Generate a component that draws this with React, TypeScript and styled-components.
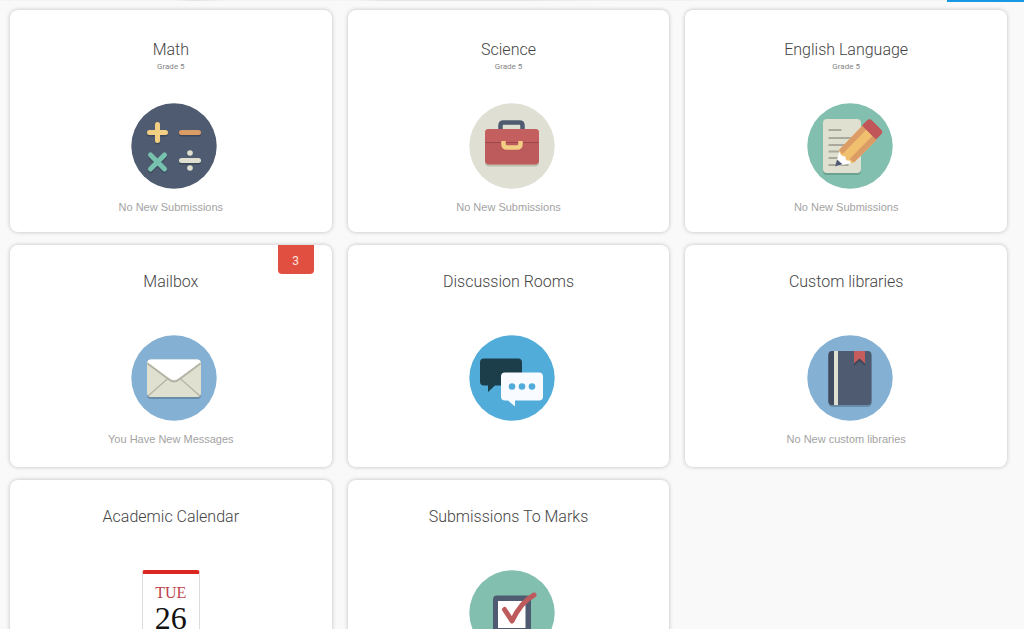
import React from "react";
import styled, { createGlobalStyle, css } from "styled-components";

const GlobalStyle = createGlobalStyle`
  * { box-sizing: border-box; }
  body {
    margin: 0;
    background: #f9f9f9;
    font-family: Roboto, "Liberation Sans", sans-serif;
  }
`;

const TopBar = styled.header`
  display: flex;
  justify-content: flex-end;
  height: 2px;
  background: linear-gradient(
      90deg,
      #f4f4f4 17%,
      #e2e2e2 19%,
      #f4f4f4 22%,
      #f4f4f4 35%,
      #e6e6e6 37%,
      #e6e6e6 52%,
      #f0f0f0 58%,
      #f4f4f4 90%
    )
    top / 100% 1px no-repeat;
`;

const TopBarAccent = styled.div`
  width: 77px;
  background: #1699e2;
`;

const Board = styled.main`
  display: grid;
  grid-template-columns: repeat(3, minmax(0, 1fr));
  column-gap: 16px;
  row-gap: 13px;
  padding: 8px 17px 13px 10px;
`;

const Card = styled.a<{ $graded?: boolean }>`
  position: relative;
  display: flex;
  flex-direction: column;
  align-items: center;
  min-height: 222px;
  padding-top: ${(p) => (p.$graded ? "28px" : "25px")};
  border-radius: 8px;
  background: #fff;
  box-shadow: 0 0 4px rgba(0, 0, 0, 0.24);
  color: #555;
  text-decoration: none;
`;

const Heading = styled.div`
  display: flex;
  flex-direction: column;
  align-items: center;
  height: 65px;
`;

const Title = styled.h2`
  margin: 0;
  font-size: 16px;
  line-height: 24px;
  font-weight: 300;
  color: #444;
`;

const Grade = styled.span`
  font-size: 8px;
  line-height: 10px;
  color: #858585;
`;

const Picture = styled.div<{ $round?: boolean }>`
  display: flex;
  justify-content: center;
  height: 86px;
  ${(p) =>
    p.$round &&
    css`
      padding-left: 7px;
    `}
`;

const Status = styled.p`
  margin: 11px 0 0;
  font-family: "Liberation Sans", sans-serif;
  font-size: 11px;
  line-height: 14px;
  color: #a3a3a3;
`;

const Badge = styled.span`
  position: absolute;
  top: 0;
  right: 18px;
  width: 36px;
  height: 29px;
  border-radius: 0 0 4px 4px;
  background: #e04f40;
  color: #fbe3df;
  font-size: 12px;
  line-height: 32px;
  text-align: center;
`;

const CalendarPage = styled.div`
  width: 58px;
  height: 76px;
  border: 1px solid #dcdcdc;
  border-top: 4px solid #d9281f;
  border-radius: 3px;
  background: #fff;
  font-family: "Liberation Serif", serif;
  text-align: center;
`;

const Weekday = styled.div`
  padding-top: 10px;
  font-size: 16px;
  line-height: 18px;
  color: #bb3f4a;
`;

const DayNumber = styled.div`
  font-size: 32px;
  line-height: 32px;
  color: #111;
`;

const Disc = ({ fill, children }: { fill: string; children: React.ReactNode }) => (
  <svg width="86" height="86" viewBox="0 0 86 86" aria-hidden="true">
    <circle cx="43" cy="43" r="42.7" fill={fill} />
    {children}
  </svg>
);

const MathIcon = () => (
  <Disc fill="#4f5b70">
    <g fill="none" strokeWidth="5" strokeLinecap="round">
      <g stroke="#3c475a" transform="translate(0 1.5)">
        <path d="M18.5 29.5h16M26.5 21.5v16M50.5 29.5h17M19.5 52l14 14M33.5 52l-14 14M50.5 57.5h17" />
      </g>
      <path stroke="#f3cf84" d="M18.5 29.5h16M26.5 21.5v16" />
      <path stroke="#dc9c66" d="M50.5 29.5h17" />
      <path stroke="#76c2af" d="M19.5 52l14 14M33.5 52l-14 14" />
      <path stroke="#e0e0d1" d="M50.5 57.5h17" />
    </g>
    <g fill="#e0e0d1">
      <circle cx="59" cy="50" r="2.8" />
      <circle cx="59" cy="65" r="2.8" />
    </g>
  </Disc>
);

const BriefcaseIcon = () => (
  <Disc fill="#dfe0d3">
    <path d="M31.500 28v-5.500q0-3 3-3h16q3 0 3 3v5.500" fill="none" stroke="#4f5b70" strokeWidth="4.500" />
    <rect x="16" y="28" width="54" height="35.500" rx="4" fill="#bcbfb0" />
    <rect x="16" y="26" width="54" height="35.500" rx="4" fill="#bd5a5c" />
    <path d="M16 30q0-4 4-4h46q4 0 4 4v9.500H16z" fill="#c45f60" />
    <path d="M16 39.500h54" stroke="#9d494c" strokeWidth="1.200" />
    <path d="M34.500 38v3q0 3.500 3.500 3.500h10q3.500 0 3.500-3.500v-3" fill="none" stroke="#f3cf84" strokeWidth="4.500" />
  </Disc>
);

const PencilIcon = () => (
  <Disc fill="#82bfae">
    <rect x="16" y="18" width="38" height="54" rx="4" fill="#6ca292" />
    <rect x="16" y="16" width="38" height="54" rx="4" fill="#e0e0d1" />
    <path d="M21.500 27h13M21.500 35h23M21.500 42h20M21.500 48.500h14M21.500 55h10M21.500 62h20" stroke="#aaa99b" strokeWidth="1.800" />
    <path d="M28 63.500l5-17 14 13z" fill="#fff" />
    <path d="M28 63.500l2-7 5.500 4.800z" fill="#4f5b70" />
    <path d="M32 47L55.500 22.500 69.500 37 47 59.500q-4 2-4-2-5 1-4.500-4-5 .5-6.500-6.500z" fill="#f0c06e" />
    <path d="M32 47l23.500-24.500 4 4L35.500 51z" fill="#dc9c66" />
    <path d="M42.500 56L65.500 32.800l4 4.200L47 59.500z" fill="#dc9c66" />
    <path d="M55 22.500l5-5q2.500-2.500 5 0l9 9q2.500 2.500 0 5l-5 5z" fill="#c15558" />
  </Disc>
);

const EnvelopeIcon = () => (
  <Disc fill="#84b1d3">
    <rect x="16" y="26.500" width="54" height="37.500" rx="4" fill="#698da9" />
    <rect x="16" y="24.500" width="54" height="37.500" rx="4" fill="#e0e0d1" />
    <path d="M17 61l21-18.500M69 61L48 42.500" stroke="#b4b4a6" strokeWidth="1.300" />
    <path d="M16.500 28.500l21.500 16q5 4 10 0l21.500-16" fill="none" stroke="#b4b4a6" strokeWidth="1.800" />
    <path d="M16.500 27q.5-2.500 3.500-2.500h46q3 0 3.500 2.500L48 43q-5 4-10 0z" fill="#fff" />
  </Disc>
);

const ChatIcon = () => (
  <Disc fill="#52acda">
    <path d="M15 23.500h34q4 0 4 4v19q0 4-4 4H26L19 57v-6.500h-4q-4 0-4-4v-19q0-4 4-4z" fill="#1b3e4a" />
    <path d="M36 37.500h34q4 0 4 4v20q0 4-4 4H46V71.500l-7-6h-3q-4 0-4-4v-20q0-4 4-4z" fill="#f8fbff" />
    <g fill="#52acda">
      <circle cx="43" cy="51.500" r="3.300" />
      <circle cx="53" cy="51.500" r="3.300" />
      <circle cx="63" cy="51.500" r="3.300" />
    </g>
  </Disc>
);

const BookIcon = () => (
  <Disc fill="#84b1d3">
    <rect x="21.500" y="18" width="43" height="54" rx="4" fill="#698da9" />
    <rect x="21.500" y="16" width="43" height="54" rx="4" fill="#4f5b70" />
    <path d="M21.500 20q0-4 4-4h1.500v54h-1.500q-4 0-4-4z" fill="#414c60" />
    <path d="M27 16h4v54h-4z" fill="#e0e0d1" />
    <path d="M47 18h11v13l-5.500-5-5.500 5z" fill="#3d4759" />
    <path d="M47 16h11v12.500l-5.500-5-5.500 5z" fill="#c75c5c" />
  </Disc>
);

const CheckIcon = () => (
  <Disc fill="#82bfae">
    <rect x="24" y="27.500" width="38" height="38" rx="4" fill="#6ca292" />
    <rect x="24" y="25.500" width="38" height="38" rx="4" fill="#4f5b70" />
    <rect x="29" y="31" width="27.500" height="27" fill="#fff" />
    <path d="M35.500 39.500l7.500 11.500Q52 32 65 25" fill="none" stroke="#bd5a5c" strokeWidth="5" strokeLinecap="round" strokeLinejoin="round" />
  </Disc>
);

const CalendarIcon = () => (
  <CalendarPage>
    <Weekday>TUE</Weekday>
    <DayNumber>26</DayNumber>
  </CalendarPage>
);

type Tile = {
  title: string;
  icon: React.ReactNode;
  grade?: string;
  status?: string;
  count?: number;
  flat?: boolean;
};

const tiles: Tile[] = [
  { title: "Math", grade: "Grade 5", icon: <MathIcon />, status: "No New Submissions" },
  { title: "Science", grade: "Grade 5", icon: <BriefcaseIcon />, status: "No New Submissions" },
  { title: "English Language", grade: "Grade 5", icon: <PencilIcon />, status: "No New Submissions" },
  { title: "Mailbox", icon: <EnvelopeIcon />, status: "You Have New Messages", count: 3 },
  { title: "Discussion Rooms", icon: <ChatIcon /> },
  { title: "Custom libraries", icon: <BookIcon />, status: "No New custom libraries" },
  { title: "Academic Calendar", icon: <CalendarIcon />, flat: true },
  { title: "Submissions To Marks", icon: <CheckIcon /> },
];

export default function App() {
  return (
    <>
      <GlobalStyle />
      <TopBar>
        <TopBarAccent />
      </TopBar>
      <Board>
        {tiles.map((tile) => (
          <Card key={tile.title} href="#" $graded={Boolean(tile.grade)}>
            {tile.count && <Badge>{tile.count}</Badge>}
            <Heading>
              <Title>{tile.title}</Title>
              {tile.grade && <Grade>{tile.grade}</Grade>}
            </Heading>
            <Picture $round={!tile.flat}>{tile.icon}</Picture>
            {tile.status && <Status>{tile.status}</Status>}
          </Card>
        ))}
      </Board>
    </>
  );
}
